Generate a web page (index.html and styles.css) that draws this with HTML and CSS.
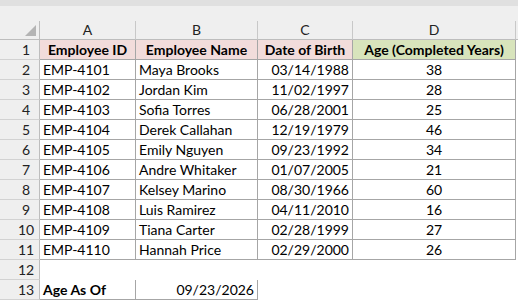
FILE: index.html
```html
<!DOCTYPE html>
<html>
<head>
<meta charset="utf-8">
<link rel="stylesheet" href="styles.css">
</head>
<body>
<div class="topbar"></div>
<div class="gap"></div>
<div class="sheet">
  <div class="corner"><span class="tri"></span></div>
  <div class="ch">A</div><div class="ch">B</div><div class="ch">C</div><div class="ch">D</div><div class="ch edge"></div>

  <div class="rh">1</div>
  <div class="c hd pink b">Employee ID</div>
  <div class="c hd pink b">Employee Name</div>
  <div class="c hd pink b">Date of Birth</div>
  <div class="c hd green b">Age (Completed Years)</div>
  <div class="c empty"></div>

  <div class="rh">2</div><div class="c b">EMP-4101</div><div class="c b">Maya Brooks</div><div class="c b r">03/14/1988</div><div class="c b ctr">38</div><div class="c empty"></div>
  <div class="rh">3</div><div class="c b">EMP-4102</div><div class="c b">Jordan Kim</div><div class="c b r">11/02/1997</div><div class="c b ctr">28</div><div class="c empty"></div>
  <div class="rh">4</div><div class="c b">EMP-4103</div><div class="c b">Sofia Torres</div><div class="c b r">06/28/2001</div><div class="c b ctr">25</div><div class="c empty"></div>
  <div class="rh">5</div><div class="c b">EMP-4104</div><div class="c b">Derek Callahan</div><div class="c b r">12/19/1979</div><div class="c b ctr">46</div><div class="c empty"></div>
  <div class="rh">6</div><div class="c b">EMP-4105</div><div class="c b">Emily Nguyen</div><div class="c b r">09/23/1992</div><div class="c b ctr">34</div><div class="c empty"></div>
  <div class="rh">7</div><div class="c b">EMP-4106</div><div class="c b">Andre Whitaker</div><div class="c b r">01/07/2005</div><div class="c b ctr">21</div><div class="c empty"></div>
  <div class="rh">8</div><div class="c b">EMP-4107</div><div class="c b">Kelsey Marino</div><div class="c b r">08/30/1966</div><div class="c b ctr">60</div><div class="c empty"></div>
  <div class="rh">9</div><div class="c b">EMP-4108</div><div class="c b">Luis Ramirez</div><div class="c b r">04/11/2010</div><div class="c b ctr">16</div><div class="c empty"></div>
  <div class="rh">10</div><div class="c b">EMP-4109</div><div class="c b">Tiana Carter</div><div class="c b r">02/28/1999</div><div class="c b ctr">27</div><div class="c empty"></div>
  <div class="rh">11</div><div class="c b">EMP-4110</div><div class="c b">Hannah Price</div><div class="c b r">02/29/2000</div><div class="c b ctr">26</div><div class="c empty"></div>

  <div class="rh">12</div><div class="c"></div><div class="c"></div><div class="c"></div><div class="c"></div><div class="c empty"></div>

  <div class="rh">13</div><div class="c b hd">Age As Of</div><div class="c b r">09/23/2026</div><div class="c"></div><div class="c"></div><div class="c empty"></div>
</div>
</body>
</html>
```
FILE: styles.css
```css
html, body {
  margin: 0;
  padding: 0;
  background: #ffffff;
  overflow: hidden;
}
body {
  width: 518px;
  height: 302px;
  font-family: Lato, "Open Sans", sans-serif;
  font-size: 14px;
  color: #000;
}
.topbar {
  height: 6px;
  background: #e0e0e0;
}
.gap {
  height: 15px;
  background: #efefef;
}
.sheet {
  display: grid;
  grid-template-columns: 40px 96px 122px 95px 163px 2px;
  grid-auto-rows: 20px;
  grid-template-rows: 19px;
}
.corner {
  position: relative;
  background: #efefef;
  border-right: 1px solid #bdbdbd;
  border-bottom: 1px solid #bdbdbd;
}
.tri {
  position: absolute;
  right: 3px;
  bottom: 3px;
  width: 0;
  height: 0;
  border-left: 11px solid transparent;
  border-bottom: 11px solid #b4b4b4;
}
.ch {
  background: #efefef;
  border-right: 1px solid #c8c8c8;
  border-bottom: 1px solid #bdbdbd;
  text-align: center;
  line-height: 18px;
  color: #222;
}
.ch.edge {
  border-right: none;
}
.rh {
  background: #efefef;
  border-right: 1px solid #bdbdbd;
  border-bottom: 1px solid #d2d2d2;
  padding-left: 13px;
  text-align: center;
  line-height: 19px;
  color: #222;
}
.c {
  padding: 0 3px;
  line-height: 20px;
  white-space: nowrap;
  overflow: hidden;
}
.c.b {
  border-right: 1px solid #a6a6a6;
  border-bottom: 1px solid #a6a6a6;
  line-height: 19px;
}
.c.empty {
  padding: 0;
}
.hd {
  font-weight: bold;
}
.pink {
  background: #f2dcdb;
  text-align: center;
}
.green {
  background: #d8e4bc;
  text-align: center;
}
.r {
  text-align: right;
}
.ctr {
  text-align: center;
}
```
